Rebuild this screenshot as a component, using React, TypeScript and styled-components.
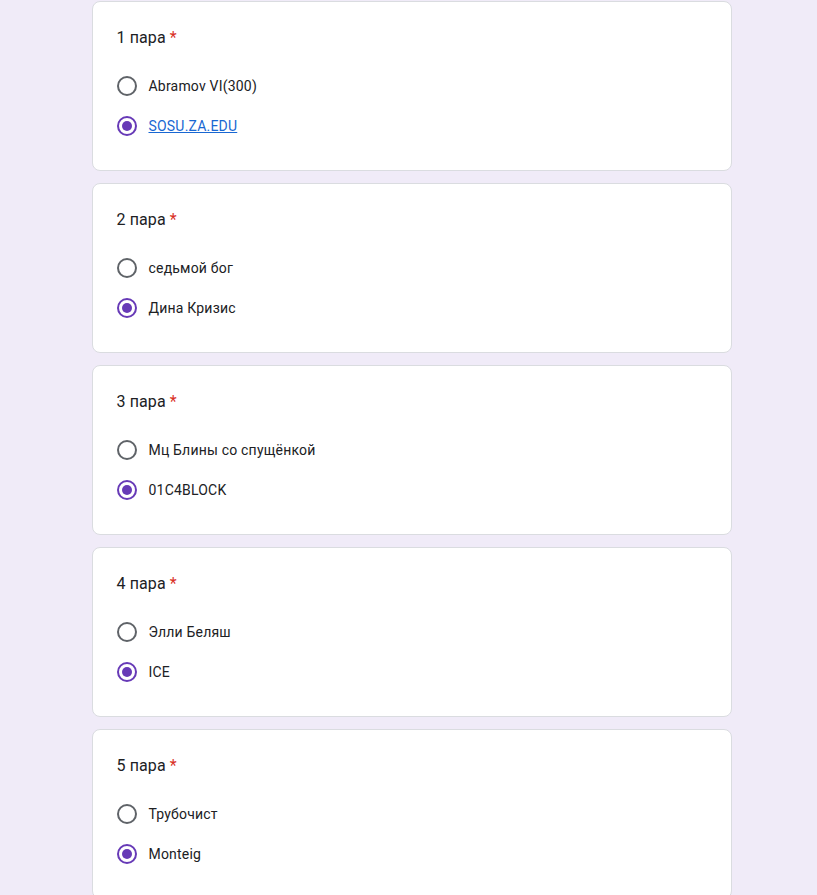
import React from "react";
import styled, { createGlobalStyle } from "styled-components";

const Global = createGlobalStyle`
  html, body { margin: 0; padding: 0; background: #f0ebf8; }
  body { font-family: Roboto, "Noto Sans", Arial, sans-serif; color: #202124; }
`;

const Page = styled.div`
  display: flex;
  flex-direction: column;
  align-items: center;
  gap: 12px;
  padding: 1px 0 0 6px;
  min-height: 895px;
  box-sizing: border-box;
`;

const Card = styled.div`
  width: 640px;
  box-sizing: border-box;
  background: #fff;
  border: 1px solid #dadce0;
  border-radius: 8px;
  padding: 24px 24px 24px;
`;

const Title = styled.div`
  font-size: 16px;
  line-height: 24px;
  letter-spacing: 0.1px;
  color: #202124;
`;

const Star = styled.span`
  color: #d93025;
  margin-left: 4px;
`;

const Options = styled.div`
  display: flex;
  flex-direction: column;
  margin-top: 16px;
`;

const Option = styled.label`
  display: flex;
  align-items: center;
  height: 40px;
  gap: 12px;
  font-size: 14px;
  letter-spacing: 0.2px;
`;

const Radio = styled.span<{ $on: boolean }>`
  width: 20px;
  height: 20px;
  box-sizing: border-box;
  border-radius: 50%;
  border: 2px solid ${(p) => (p.$on ? "#673ab7" : "#5f6368")};
  display: flex;
  align-items: center;
  justify-content: center;
  &::after {
    content: "";
    width: 10px;
    height: 10px;
    border-radius: 50%;
    background: #673ab7;
    display: ${(p) => (p.$on ? "block" : "none")};
  }
`;

const Text = styled.span<{ $link?: boolean }>`
  color: ${(p) => (p.$link ? "#1967d2" : "#202124")};
  text-decoration: ${(p) => (p.$link ? "underline" : "none")};
`;

const data = [
  { t: "1 пара", a: "Abramov VI(300)", b: "SOSU.ZA.EDU", link: true },
  { t: "2 пара", a: "седьмой бог", b: "Дина Кризис" },
  { t: "3 пара", a: "Мц Блины со спущёнкой", b: "01C4BLOCK" },
  { t: "4 пара", a: "Элли Беляш", b: "ICE" },
  { t: "5 пара", a: "Трубочист", b: "Monteig" },
];

export default function App() {
  return (
    <>
      <Global />
      <Page>
        {data.map((d) => (
          <Card key={d.t}>
            <Title>
              {d.t}
              <Star>*</Star>
            </Title>
            <Options>
              <Option>
                <Radio $on={false} />
                <Text>{d.a}</Text>
              </Option>
              <Option>
                <Radio $on={true} />
                <Text $link={d.link}>{d.b}</Text>
              </Option>
            </Options>
          </Card>
        ))}
      </Page>
    </>
  );
}
